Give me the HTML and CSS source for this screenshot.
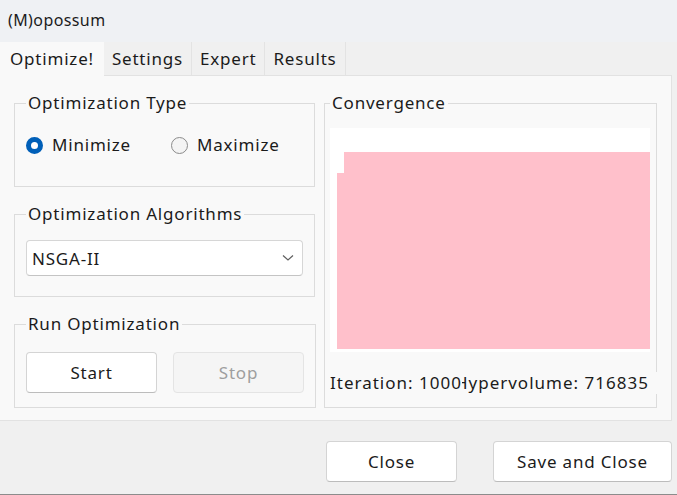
FILE: index.html
```html
<!DOCTYPE html>
<html lang="en">
<head>
    <meta charset="UTF-8">
    <meta name="viewport" content="width=device-width, initial-scale=1.0">
    <title>(M)opossum</title>
    <link rel="stylesheet" href="styles.css">
</head>
<body>
    <div class="window">
        <div class="titlebar">(M)opossum</div>

        <div class="tabs">
            <div class="tab active">Optimize!</div>
            <div class="tab">Settings</div>
            <div class="tab">Expert</div>
            <div class="tab">Results</div>
        </div>

        <div class="pane">
            <div class="leftcol">
                <fieldset class="group typegroup">
                    <legend>Optimization Type</legend>
                    <div class="radios">
                        <label class="radio"><span class="dot checked"></span>Minimize</label>
                        <label class="radio"><span class="dot"></span>Maximize</label>
                    </div>
                </fieldset>

                <fieldset class="group algogroup">
                    <legend>Optimization Algorithms</legend>
                    <div class="combo">
                        <span>NSGA-II</span>
                        <svg width="12" height="8" viewBox="0 0 12 8">
                            <polyline points="1,1.5 6,6 11,1.5" fill="none" stroke="#5f5f5f" stroke-width="1.2"/>
                        </svg>
                    </div>
                </fieldset>

                <fieldset class="group rungroup">
                    <legend>Run Optimization</legend>
                    <div class="runbtns">
                        <button class="btn">Start</button>
                        <button class="btn disabled">Stop</button>
                    </div>
                </fieldset>
            </div>

            <fieldset class="group convgroup">
                <legend>Convergence</legend>
                <div class="chart">
                    <svg width="320" height="224" viewBox="0 0 320 224">
                        <rect width="320" height="224" fill="#ffffff"/>
                        <polygon points="7,45 14,45 14,24 320,24 320,221 7,221" fill="#ffc0cb"/>
                    </svg>
                </div>
                <div class="status">
                    <span class="iter">Iteration: 1000</span>
                    <span class="hv">Hypervolume: 716835</span>
                </div>
            </fieldset>
        </div>

        <div class="footer">
            <button class="btn wide">Close</button>
            <button class="btn wider">Save and Close</button>
        </div>
    </div>
</body>
</html>
```

FILE: styles.css
```css
body {
    margin: 0;
    font-family: "Noto Sans", "Open Sans", sans-serif;
    font-size: 17px;
    letter-spacing: 0.8px;
    color: #1b1b1b;
}

.window {
    width: 677px;
    height: 494px;
    background-color: #f0f0f0;
    border-bottom: 1px solid #8c8c8c;
    overflow: hidden;
}

.titlebar {
    height: 42px;
    line-height: 40px;
    padding-left: 8px;
    font-size: 16px;
    letter-spacing: 0.4px;
    background-color: #eff1f4;
}

.tabs {
    display: flex;
    height: 33px;
}

.tab {
    padding: 0 8px;
    line-height: 33px;
    border-right: 1px solid #e3e3e3;
    background-color: #f0f0f0;
}

.tab.active {
    padding: 0 10px;
    background-color: #f9f9f9;
    border-right: none;
    position: relative;
    margin-bottom: -1px;
}

.pane {
    box-sizing: border-box;
    width: 672px;
    height: 346px;
    padding: 16px 0 0 14px;
    background-color: #f9f9f9;
    border: 1px solid #e2e2e2;
    border-left: none;
    display: flex;
    gap: 9px;
}

.leftcol {
    display: flex;
    flex-direction: column;
    gap: 16px;
    width: 301px;
}

.group {
    margin: 0;
    border: 1px solid #dcdcdc;
    padding: 0 11px;
}

.group legend {
    padding: 0 2px;
    line-height: 22px;
}

.typegroup {
    height: 95px;
    box-sizing: border-box;
    padding-top: 20px;
}

.radios {
    display: flex;
    gap: 40px;
}

.radio {
    display: flex;
    align-items: center;
    gap: 9px;
    line-height: 22px;
}

.dot {
    width: 15px;
    height: 15px;
    border: 1px solid #8b8b8b;
    border-radius: 50%;
    background-color: #f4f4f4;
}

.dot.checked {
    width: 7px;
    height: 7px;
    border: 5px solid #005fb8;
    background-color: #ffffff;
}

.algogroup {
    height: 94px;
    box-sizing: border-box;
    padding-top: 15px;
}

.combo {
    height: 36px;
    box-sizing: border-box;
    display: flex;
    align-items: center;
    justify-content: space-between;
    padding: 0 8px 0 5px;
    background-color: #ffffff;
    border: 1px solid #d6d6d6;
    border-bottom-color: #c4c4c4;
    border-radius: 4px;
}

.rungroup {
    height: 95px;
    box-sizing: border-box;
    padding-top: 17px;
}

.runbtns {
    display: flex;
    gap: 16px;
}

.btn {
    font-family: inherit;
    font-size: 17px;
    letter-spacing: 0.8px;
    color: #1b1b1b;
    height: 41px;
    background-color: #ffffff;
    border: 1px solid #d4d4d4;
    border-bottom-color: #bcbcbc;
    border-radius: 4px;
}

.runbtns .btn {
    width: 131px;
}

.btn.disabled {
    color: #9e9e9e;
    background-color: #f5f5f5;
    border-color: #e4e4e4;
}

.convgroup {
    width: 333px;
    height: 316px;
    box-sizing: border-box;
    padding: 14px 5px 0 5px;
}

.chart svg {
    display: block;
}

.status {
    display: flex;
    margin-top: 20px;
    line-height: 22px;
    letter-spacing: 1px;
    margin-right: -10px;
    background-color: #f9f9f9;
    position: relative;
}

.iter {
    position: relative;
    z-index: 1;
    background-color: #f9f9f9;
}

.hv {
    margin-left: -7px;
}

.footer {
    display: flex;
    justify-content: flex-end;
    gap: 36px;
    padding: 20px 5px 0 0;
}

.footer .wide {
    width: 131px;
}

.footer .wider {
    width: 179px;
}
```
